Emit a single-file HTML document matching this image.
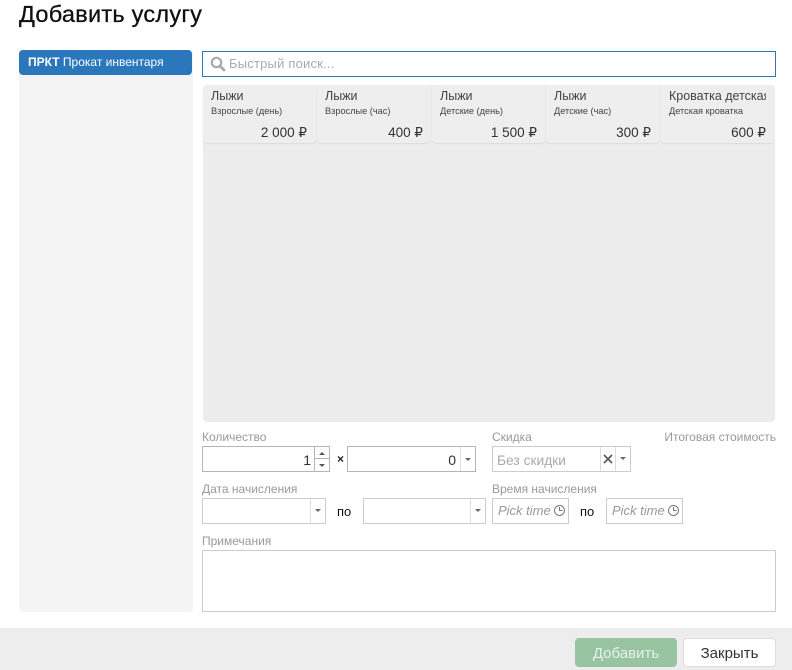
<!DOCTYPE html>
<html lang="ru"><head><meta charset="utf-8"><title>Добавить услугу</title>
<style>
html,body{margin:0;padding:0;background:#fff}
body{width:792px;height:670px;position:relative;overflow:hidden;font-family:"Liberation Sans","DejaVu Sans",sans-serif;color:#333}
.a{position:absolute;box-sizing:border-box;white-space:nowrap}
.lbl{font-size:12px;color:#999;line-height:16px}
.box{border:1px solid #ccc;background:#fff}
.box2{border:1px solid #b5b5b5;background:#fff}
.card{position:absolute;top:85px;height:58px;width:113px;background:#eee;border-radius:4px;box-shadow:0 1px 1px #dcdcdc;overflow:hidden}
.card .t{position:absolute;left:8px;top:3px;font-size:12.5px;line-height:16px;color:#444;white-space:nowrap}
.card .s{position:absolute;left:8px;top:20px;font-size:9.2px;line-height:13px;color:#444;white-space:nowrap}
.card .p{position:absolute;right:8px;top:39px;font-size:13.5px;line-height:18px;color:#333;white-space:nowrap}
.car{position:absolute;width:0;height:0;border-left:3px solid transparent;border-right:3px solid transparent;border-top:3px solid #666}
.sep{position:absolute;width:1px;background:#ddd}
.pt{font-style:italic;font-size:13px;color:#999;line-height:18px}
</style></head><body>
<div class="a" style="left:19px;top:-1px;font-size:23.5px;line-height:30px;color:#111;letter-spacing:.25px;-webkit-text-stroke:.3px #111">Добавить услугу</div>

<div class="a" style="left:19px;top:50px;width:174px;height:562px;background:#f4f4f4;border-radius:4px"></div>
<div class="a" style="left:19px;top:50px;width:173px;height:25px;background:#2b77bc;border-radius:4px;color:#fff;font-size:12px;line-height:24px;padding-left:9px"><b>ПРКТ</b> Прокат инвентаря</div>

<div class="a" style="left:202px;top:51px;width:574px;height:26px;border:1px solid #2b77bc;background:#fff"></div>
<svg class="a" style="left:210px;top:56px" width="16" height="16" viewBox="0 0 16 16"><circle cx="6.5" cy="6.5" r="4.7" fill="none" stroke="#aaa" stroke-width="2.2"/><path d="M10 10l4 4" stroke="#aaa" stroke-width="2.8" stroke-linecap="round"/></svg>
<div class="a" style="left:229px;top:55px;font-size:13px;line-height:18px;color:#aaa;letter-spacing:.2px">Быстрый поиск...</div>

<div class="a" style="left:203px;top:85px;width:572px;height:337px;background:#ececec;border-radius:4px"></div>
<div class="card" style="left:203px"><div class="t">Лыжи</div><div class="s">Взрослые (день)</div><div class="p" style="right:9px">2 000 ₽</div></div>
<div class="card" style="left:317px"><div class="t">Лыжи</div><div class="s">Взрослые (час)</div><div class="p" style="right:7px">400 ₽</div></div>
<div class="card" style="left:432px"><div class="t">Лыжи</div><div class="s">Детские (день)</div><div class="p">1 500 ₽</div></div>
<div class="card" style="left:546px"><div class="t">Лыжи</div><div class="s">Детские (час)</div><div class="p">300 ₽</div></div>
<div class="card" style="left:661px"><div class="t" style="width:97px;overflow:hidden">Кроватка детская</div><div class="s">Детская кроватка</div><div class="p">600 ₽</div></div>

<div class="a lbl" style="left:202px;top:429px">Количество</div>
<div class="a box2" style="left:202px;top:446px;width:128px;height:26px"></div>
<div class="a" style="left:302px;top:450px;width:9px;text-align:right;font-size:14px;line-height:20px;color:#333">1</div>
<div class="sep" style="left:314px;top:447px;height:24px;background:#b5b5b5"></div>
<div class="a" style="left:315px;top:458px;width:14px;height:1px;background:#b5b5b5"></div>
<div class="car" style="left:319px;top:452px;border-top:0;border-bottom:3px solid #555"></div>
<div class="car" style="left:319px;top:464px;border-top-color:#555"></div>
<div class="a" style="left:337px;top:451px;font-size:12px;line-height:16px;color:#222;font-weight:bold">×</div>
<div class="a box2" style="left:347px;top:446px;width:129px;height:26px"></div>
<div class="a" style="left:446px;top:450px;width:10px;text-align:right;font-size:14px;line-height:20px;color:#333">0</div>
<div class="sep" style="left:460px;top:447px;height:24px"></div>
<div class="car" style="left:465px;top:458px"></div>

<div class="a lbl" style="left:492px;top:429px">Скидка</div>
<div class="a lbl" style="right:16px;top:429px">Итоговая стоимость</div>
<div class="a box" style="left:492px;top:446px;width:139px;height:26px"></div>
<div class="a" style="left:497px;top:452px;font-size:13.8px;line-height:18px;color:#aaa">Без скидки</div>
<div class="sep" style="left:600px;top:447px;height:24px"></div>
<div class="sep" style="left:615px;top:447px;height:24px"></div>
<svg class="a" style="left:603px;top:454px" width="10" height="10" viewBox="0 0 10 10"><path d="M1 1l8 8M9 1l-8 8" stroke="#555" stroke-width="1.6"/></svg>
<div class="car" style="left:620px;top:457px"></div>

<div class="a lbl" style="left:202px;top:481px">Дата начисления</div>
<div class="a box" style="left:202px;top:498px;width:124px;height:26px"></div>
<div class="sep" style="left:310px;top:499px;height:24px"></div>
<div class="car" style="left:315px;top:509px"></div>
<div class="a" style="left:337px;top:503px;font-size:13px;line-height:18px;color:#111">по</div>
<div class="a box" style="left:363px;top:498px;width:123px;height:26px"></div>
<div class="sep" style="left:470px;top:499px;height:24px"></div>
<div class="car" style="left:475px;top:509px"></div>

<div class="a lbl" style="left:492px;top:481px">Время начисления</div>
<div class="a box" style="left:492px;top:498px;width:77px;height:26px"></div>
<div class="a pt" style="left:498px;top:502px">Pick time</div>
<svg class="a" style="left:553px;top:504px" width="13" height="13" viewBox="0 0 13 13"><circle cx="6.5" cy="6.5" r="5" fill="none" stroke="#777"/><path d="M6.5 3v3.5h3.2" fill="none" stroke="#777"/></svg>
<div class="a" style="left:580px;top:503px;font-size:13px;line-height:18px;color:#111">по</div>
<div class="a box" style="left:606px;top:498px;width:77px;height:26px"></div>
<div class="a pt" style="left:612px;top:502px">Pick time</div>
<svg class="a" style="left:667px;top:504px" width="13" height="13" viewBox="0 0 13 13"><circle cx="6.5" cy="6.5" r="5" fill="none" stroke="#777"/><path d="M6.5 3v3.5h3.2" fill="none" stroke="#777"/></svg>

<div class="a lbl" style="left:202px;top:533px">Примечания</div>
<div class="a box" style="left:202px;top:550px;width:574px;height:62px"></div>

<div class="a" style="left:0;top:628px;width:792px;height:42px;background:#ededed"></div>
<div class="a" style="left:575px;top:638px;width:102px;height:29px;background:#98c4a2;border-radius:4px;color:#e6f2e9;font-size:15px;line-height:31px;text-align:center">Добавить</div>
<div class="a" style="left:683px;top:638px;width:93px;height:29px;background:#fff;border:1px solid #ddd;border-radius:4px;color:#333;font-size:15px;line-height:29px;text-align:center">Закрыть</div>
</body></html>
